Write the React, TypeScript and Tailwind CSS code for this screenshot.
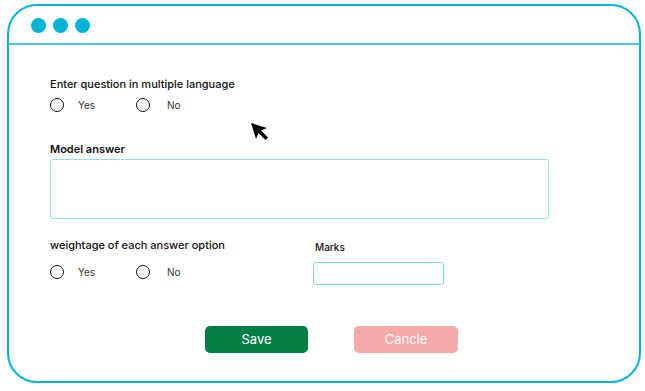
import React from "react";

function Radio({ label, gap }: { label: string; gap: string }) {
  return (
    <div className="flex items-center">
      <span className="block w-[14px] h-[14px] rounded-full border-[1.5px] border-[#111]" />
      <span className={`${gap} text-[10px] text-[#333]`}>{label}</span>
    </div>
  );
}

export default function App() {
  return (
    <div
      className="w-[645px] h-[391px] bg-white pt-[4px] pl-[7px]"
      style={{ fontFamily: "Inter, 'Open Sans', sans-serif" }}
    >
      <div className="relative w-[634px] h-[379px] border-2 border-[#00b4d8] rounded-[30px] flex flex-col overflow-hidden">
        <div className="h-[39px] border-b-2 border-[#48cae4] flex items-center gap-[7px] pl-[22px] pt-[1px] shrink-0">
          <span className="block w-[15px] h-[15px] rounded-full bg-[#00b4d8]" />
          <span className="block w-[15px] h-[15px] rounded-full bg-[#00b4d8]" />
          <span className="block w-[15px] h-[15px] rounded-full bg-[#00b4d8]" />
        </div>
        <div className="flex flex-col pl-[41px] pt-[32px]">
          <div className="text-[11px] font-medium text-[#111] leading-[14px]">
            Enter question in multiple language
          </div>
          <div className="flex items-center mt-[6px] h-[16px]">
            <div className="w-[86px]">
              <Radio label="Yes" gap="ml-[14px]" />
            </div>
            <Radio label="No" gap="ml-[17px]" />
          </div>
          <div className="text-[11px] font-semibold text-[#111] leading-[14px] mt-[29px]">
            Model answer
          </div>
          <div className="mt-[3px] w-[499px] h-[60px] border border-[#90e0ef] rounded-[3px]" />
          <div className="flex mt-[19px]">
            <div className="w-[263px] flex flex-col">
              <div className="text-[11px] font-medium text-[#111] leading-[14px]">
                weightage of each answer option
              </div>
              <div className="flex items-center mt-[12px] h-[16px]">
                <div className="w-[86px]">
                  <Radio label="Yes" gap="ml-[14px]" />
                </div>
                <Radio label="No" gap="ml-[17px]" />
              </div>
            </div>
            <div className="flex flex-col pt-[2px]">
              <div className="text-[10px] font-medium text-[#111] leading-[14px] pl-[2px]">
                Marks
              </div>
              <div className="mt-[8px] w-[131px] h-[23px] border border-[#7fd8ea] rounded-[3px]" />
            </div>
          </div>
          <div className="flex mt-[41px] pl-[155px] gap-[46px]">
            <button className="w-[103px] h-[27px] rounded-[5px] bg-[#037f46] text-white text-[13px]">
              Save
            </button>
            <button className="w-[104px] h-[27px] rounded-[5px] bg-[#f5a9a8] text-white text-[13px]">
              Cancle
            </button>
          </div>
        </div>
        <svg
          className="absolute left-[241px] top-[116px]"
          width="22"
          height="22"
          viewBox="0 0 22 22"
        >
          <path d="M1 1 L6 17 L8.5 11 L15.5 18 L18 15.5 L11 8.5 L17 6 Z" fill="#000" />
        </svg>
      </div>
    </div>
  );
}
